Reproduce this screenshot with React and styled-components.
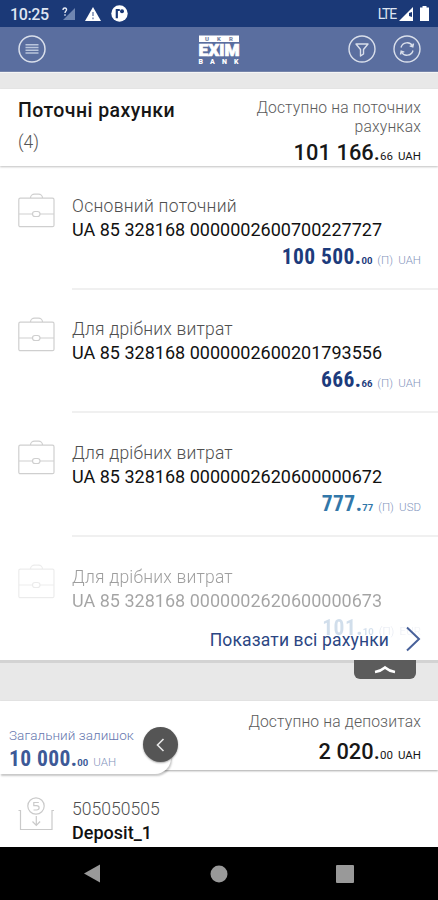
import React from 'react';
import styled, { createGlobalStyle } from 'styled-components';

const GlobalStyle = createGlobalStyle`
  *, *::before, *::after { box-sizing: border-box; }
  body { margin: 0; }
  svg { display: block; flex: none; }
`;

const Screen = styled.div`
  width: 438px;
  height: 900px;
  display: flex;
  flex-direction: column;
  overflow: hidden;
  background: #e8e8e8;
  font-family: Roboto, sans-serif;
  color: #161616;
`;

const StatusBar = styled.header`
  height: 27px;
  flex: none;
  padding: 0 9px 0 10px;
  display: flex;
  align-items: center;
  background: #1b3977;
  color: #dfe5f2;
`;

const Clock = styled.time`
  width: 52px;
  font-size: 16px;
  font-weight: 500;
  line-height: 27px;
  letter-spacing: -0.4px;
  padding-top: 1px;
`;

const StatusIcons = styled.div`
  display: flex;
  align-items: center;
  gap: ${(p) => p.$gap}px;
  margin-left: ${(p) => (p.$end ? 'auto' : 0)};
`;

const Network = styled.span`
  font-size: 14px;
  line-height: 27px;
  letter-spacing: -1.2px;
  padding-top: 1px;
  margin-right: -4px;
`;

const AppBar = styled.nav`
  height: 45px;
  flex: none;
  display: flex;
  align-items: center;
  padding: 0 17px 0 18px;
  background: #5a6e9f;
  border-bottom: 1px solid #7584a9;
`;

const IconButton = styled.button`
  width: 28px;
  height: 28px;
  padding: 0;
  border: 0;
  background: none;
`;

const LogoSlot = styled.div`
  margin-left: 152px;
  margin-right: auto;
`;

const Actions = styled.div`
  display: flex;
  gap: 17px;
`;

const Gap = styled.div`
  height: ${(p) => p.$height}px;
  flex: none;
  display: flex;
  justify-content: flex-end;
  padding-right: 22px;
  background: #e8e8e8;
  border-top: ${(p) => (p.$shaded ? '3px solid #d3d3d3' : '1px solid #f5f5f5')};
`;

const CollapseTab = styled.button`
  width: 62px;
  height: 19px;
  margin-top: -3px;
  padding: 0;
  border: 0;
  border-radius: 0 0 6px 6px;
  background: #5c5c5c;
  display: flex;
  justify-content: center;
`;

const SectionHead = styled.section`
  position: relative;
  z-index: 1;
  height: ${(p) => p.$height}px;
  flex: none;
  display: flex;
  justify-content: space-between;
  padding: ${(p) => p.$padding};
  background: #fff;
  box-shadow: 0 1px 2px rgba(0, 0, 0, ${(p) => p.$shadow});
`;

const TitleBlock = styled.div`
  padding-top: 1px;
`;

const Title = styled.h1`
  margin: 0;
  font-size: 19.5px;
  line-height: 24px;
  font-weight: 500;
  letter-spacing: 0.43px;
`;

const Count = styled.div`
  margin-top: 7px;
  font-size: 17.5px;
  line-height: 24px;
  font-weight: 300;
  color: #555;
`;

const Summary = styled.div`
  display: flex;
  flex-direction: column;
  align-items: flex-end;
  text-align: right;
`;

const SummaryLabel = styled.div`
  width: 190px;
  font-size: 15.7px;
  line-height: 19px;
  font-weight: 300;
  letter-spacing: 0.15px;
  color: #5b5b5b;
`;

const Amount = styled.div`
  display: flex;
  align-items: baseline;
  line-height: 28px;
  color: ${(p) => p.$color || '#171717'};
  margin-top: ${(p) => p.$top || 0}px;
`;

const Whole = styled.span`
  font-size: ${(p) => (p.$bold ? 21.5 : 21.8)}px;
  font-weight: ${(p) => (p.$bold ? 700 : 500)};
  font-stretch: ${(p) => (p.$bold ? '78%' : '100%')};
  letter-spacing: ${(p) => (p.$bold ? 0.4 : 0.1)}px;
  white-space: pre;
`;

const Cents = styled.span`
  font-size: ${(p) => (p.$bold ? 9.5 : 11.5)}px;
  font-weight: ${(p) => (p.$bold ? 700 : 400)};
`;

const Currency = styled.span`
  margin-left: 5px;
  font-size: 11.5px;
  font-weight: ${(p) => (p.$soft ? 300 : 400)};
  color: ${(p) => (p.$soft ? '#8495bd' : 'inherit')};
  word-spacing: 2.5px;
  white-space: pre;
`;

const AccountPanel = styled.main`
  height: 494px;
  flex: none;
  background: #fff;
  display: flex;
  flex-direction: column;
  overflow: hidden;
`;

const AccountRow = styled.article`
  height: 123.7px;
  flex: none;
  display: flex;
  padding: 26px 0 0 18px;
`;

const IconSlot = styled.div`
  opacity: ${(p) => (p.$faded ? 0.4 : 1)};
`;

const AccountBody = styled.div`
  flex: 1;
  margin-left: 17px;
  padding: ${(p) => p.$top}px 17px 0 0;
  border-bottom: ${(p) => (p.$last ? 0 : '2px solid #f0f0f0')};
`;

const AccountName = styled.div`
  font-size: 17.5px;
  line-height: 24px;
  font-weight: 300;
  letter-spacing: ${(p) => p.$spacing ?? 0.2}px;
  color: #4f4f4f;
  opacity: ${(p) => (p.$faded ? 0.55 : 1)};
`;

const AccountNumber = styled.div`
  font-size: 18px;
  line-height: 24px;
  font-weight: ${(p) => (p.$strong ? 500 : 400)};
  letter-spacing: 0.01px;
  color: #111;
  white-space: nowrap;
  opacity: ${(p) => (p.$faded ? 0.38 : 1)};
`;

const AmountRow = styled.div`
  display: flex;
  justify-content: flex-end;
  padding-top: 1px;
  ${(p) => p.$faded && `
    opacity: 0.3;
    mask-image: linear-gradient(90deg, #000 calc(100% - 60px), rgba(0, 0, 0, 0.35));
  `}
`;

const ShowAll = styled.button`
  position: relative;
  height: 36px;
  margin-top: -39px;
  flex: none;
  padding: 0 17px 0 0;
  border: 0;
  background: none;
  display: flex;
  align-items: center;
  justify-content: flex-end;
  gap: 17px;
  font: 400 17.5px/36px Roboto, sans-serif;
  letter-spacing: 0.15px;
  color: #2b4683;

  svg { margin-top: -2px; }
`;

const BalanceCard = styled.aside`
  position: absolute;
  left: 0;
  bottom: -4px;
  width: 171px;
  height: 50px;
  background: #fff;
  border-radius: 0 0 16px 0;
  box-shadow: 1px 2px 2px rgba(0, 0, 0, 0.22);
  clip-path: inset(30px -4px -5px 0);
`;

const BalanceContent = styled.div`
  position: absolute;
  left: 9px;
  top: 25px;
`;

const BalanceLabel = styled.div`
  font-size: 13.5px;
  line-height: 18px;
  font-weight: 300;
  letter-spacing: 0.07px;
  color: #6576ae;
`;

const RoundButton = styled.button`
  position: absolute;
  left: 143px;
  top: 26px;
  width: 35px;
  height: 35px;
  padding: 0;
  border: 0;
  border-radius: 50%;
  background: #555;
  box-shadow: 0 1px 2px rgba(0, 0, 0, 0.35);
  display: flex;
  align-items: center;
  justify-content: center;
`;

const DepositRow = styled.article`
  flex: 1;
  display: flex;
  padding: 26px 0 0 18px;
  background: #fff;
`;

const SystemNav = styled.footer`
  height: 53px;
  flex: none;
  background: #000;
  display: grid;
  grid-template-columns: 158px 96px 156px;
  align-items: center;
  justify-items: center;
  padding-left: 13px;
`;

const SignalUnknown = () => (
  <svg width="13" height="14" viewBox="0 0 13 14">
    <path d="M13 1v12H1z" fill="#6f86b2" />
    <path d="M1 3c0-3 4-2.5 3.5 0C4.3 4.2 3 4 3 6M3 7.2v1.5" fill="none" stroke="#e6ebf5" strokeWidth="1.4" />
  </svg>
);

const Warning = () => (
  <svg width="16" height="14" viewBox="0 0 16 14">
    <path d="M8 0l8 14H0z" fill="#fff" />
    <path d="M8 5v4M8 10.5v1.7" stroke="#6478a2" strokeWidth="1.3" />
  </svg>
);

const RoundBadge = () => (
  <svg width="17" height="17" viewBox="0 0 17 17">
    <circle cx="8.5" cy="8.5" r="8.2" fill="#fff" />
    <path d="M5.8 13.2V5h3" fill="none" stroke="#1b3977" strokeWidth="2.2" />
    <circle cx="11" cy="6.3" r="2" fill="#1b3977" />
  </svg>
);

const Signal = () => (
  <svg width="14" height="14" viewBox="0 0 14 14">
    <path d="M14 0v14H0z" fill="#fff" />
    <path d="M10 6l3-1v5l-3-1z" fill="#1b3977" />
  </svg>
);

const Battery = () => (
  <svg width="9" height="15" viewBox="0 0 9 15">
    <path d="M2.5 0h4v1.5H9V15H0V1.5h2.5z" fill="#fff" />
  </svg>
);

const MenuIcon = () => (
  <svg width="28" height="28" viewBox="0 0 28 28" fill="none" stroke="#d9dfeb">
    <circle cx="14" cy="14" r="13" strokeWidth="1.5" />
    <path d="M7.5 9.8h13M7.5 12.5h13M7.5 15.2h13M7.5 18h13" stroke="#b9c5dc" strokeWidth="1.4" />
  </svg>
);

const FilterIcon = () => (
  <svg width="28" height="28" viewBox="0 0 28 28" fill="none" stroke="#d9dfeb" strokeWidth="1.4">
    <circle cx="14" cy="14" r="13" />
    <path d="M8 9h12l-4.500 5.500V19L12.500 21v-6.500z" strokeLinejoin="round" />
  </svg>
);

const RefreshIcon = () => (
  <svg width="28" height="28" viewBox="0 0 28 28" fill="none" stroke="#d9dfeb" strokeWidth="1.4">
    <circle cx="14" cy="14" r="13" />
    <path d="M8 12.5a6.3 6.3 0 0 1 11.6-1.5M20 15.5a6.3 6.3 0 0 1-11.600 1.5M20.5 8.500l-.7 3.300-3.100-1M7.500 19.500l.7-3.300 3.100 1" />
  </svg>
);

const Logo = () => (
  <svg width="42" height="29" viewBox="0 0 42 29" fontFamily="Roboto, sans-serif" fontWeight="900" fill="#fff">
    <rect x="1" y="0.5" width="40" height="6.5" />
    <g fontSize="6" fill="#75839f">
      <text x="7" y="6">U</text>
      <text x="19" y="6">K</text>
      <text x="31" y="6">R</text>
    </g>
    <text x="0.5" y="20.5" fontSize="16" textLength="41" lengthAdjust="spacingAndGlyphs" stroke="#fff" strokeWidth="0.7">EXIM</text>
    <g fontSize="7">
      <text x="0.5" y="28.5">B</text>
      <text x="12" y="28.5">A</text>
      <text x="24" y="28.5">N</text>
      <text x="36" y="28.5">K</text>
    </g>
  </svg>
);

const Briefcase = () => (
  <svg width="37" height="36" viewBox="0 0 37 36" fill="none" stroke="#cfcfcf" strokeWidth="1.2">
    <rect x="0.8" y="6.2" width="35.2" height="28.5" rx="1.5" />
    <path d="M12.5 6c0-2.400 2-3.800 4-3.800h4c2 0 4 1.400 4 3.800M1 22h13.500M22 22h14" />
    <rect x="14.500" y="19.500" width="7.500" height="5" rx="2.500" />
  </svg>
);

const DepositIcon = () => (
  <svg width="37" height="36" viewBox="0 0 37 36" fill="none" stroke="#cacaca" strokeWidth="1.2">
    <path d="M0.5 14.5H2.5V33.500H34V14.500h2M18.300 20v9M14.500 25.500l3.800 4 3.800-4" />
    <circle cx="18" cy="10" r="8.2" />
    <path d="M20.800 6.500h-5v3.200h2.700c3.500 0 3.500 4.300 0 4.300h-3" />
  </svg>
);

const Chevron = ({ d, width, height, color, weight = 2 }) => (
  <svg width={width} height={height} viewBox={`0 0 ${width} ${height}`}>
    <path d={d} fill="none" stroke={color} strokeWidth={weight} />
  </svg>
);

const Money = ({ whole, cents, currency, color, bold, soft, top }) => (
  <Amount $color={color} $top={top}>
    <Whole $bold={bold}>{whole}.</Whole>
    <Cents $bold={bold}>{cents}</Cents>
    <Currency $soft={soft}>{currency}</Currency>
  </Amount>
);

const accounts = [
  { name: 'Основний поточний', number: 'UA 85 328168 0000002600700227727', whole: '100 500', cents: '00', currency: '(П) UAH', color: '#1c3b7c', spacing: 0.28 },
  { name: 'Для дрібних витрат', number: 'UA 85 328168 0000002600201793556', whole: '666', cents: '66', currency: '(П) UAH', color: '#1c3b7c' },
  { name: 'Для дрібних витрат', number: 'UA 85 328168 0000002620600000672', whole: '777', cents: '77', currency: '(П) USD', color: '#3277a9' },
  { name: 'Для дрібних витрат', number: 'UA 85 328168 0000002620600000673', whole: '101', cents: '10', currency: '(П) EUR', color: '#6993c0', faded: true },
];

export default function App() {
  return (
    <>
      <GlobalStyle />
      <Screen>
        <StatusBar>
          <Clock>10:25</Clock>
          <StatusIcons $gap={10}>
            <SignalUnknown />
            <Warning />
            <RoundBadge />
          </StatusIcons>
          <StatusIcons $gap={7} $end>
            <Network>LTE</Network>
            <Signal />
            <Battery />
          </StatusIcons>
        </StatusBar>
        <AppBar>
          <IconButton aria-label="Меню"><MenuIcon /></IconButton>
          <LogoSlot><Logo /></LogoSlot>
          <Actions>
            <IconButton aria-label="Фільтр"><FilterIcon /></IconButton>
            <IconButton aria-label="Оновити"><RefreshIcon /></IconButton>
          </Actions>
        </AppBar>
        <Gap $height={17} />
        <SectionHead $height={77} $padding="9px 17px 0 18px" $shadow={0.25}>
          <TitleBlock>
            <Title>Поточні рахунки</Title>
            <Count>(4)</Count>
          </TitleBlock>
          <Summary>
            <SummaryLabel>Доступно на поточних рахунках</SummaryLabel>
            <Money whole="101 166" cents="66" currency="UAH" top={3} />
          </Summary>
        </SectionHead>
        <AccountPanel>
          {accounts.map((a) => (
            <AccountRow key={a.number}>
              <IconSlot $faded={a.faded}><Briefcase /></IconSlot>
              <AccountBody $top={1.6} $last={a.faded}>
                <AccountName $faded={a.faded} $spacing={a.spacing}>{a.name}</AccountName>
                <AccountNumber $faded={a.faded}>{a.number}</AccountNumber>
                <AmountRow $faded={a.faded}>
                  <Money whole={a.whole} cents={a.cents} currency={a.currency} color={a.color} bold soft />
                </AmountRow>
              </AccountBody>
            </AccountRow>
          ))}
          <ShowAll>
            Показати всі рахунки
            <Chevron width={15} height={26} d="M1 1.5l12 11.5L1 24.5" color="#48619a" />
          </ShowAll>
        </AccountPanel>
        <Gap $height={41} $shaded>
          <CollapseTab aria-label="Згорнути">
            <Chevron width={22} height={18} d="M1 12q6-1 10-4.500q4 3.500 10 4.500" color="#fff" weight={2.5} />
          </CollapseTab>
        </Gap>
        <SectionHead $height={69} $padding="11px 17px 0 18px" $shadow={0.35}>
          <span />
          <Summary>
            <SummaryLabel>Доступно на депозитах</SummaryLabel>
            <Money whole="2 020" cents="00" currency="UAH" top={7} />
          </Summary>
          <BalanceCard />
          <BalanceContent>
            <BalanceLabel>Загальний залишок</BalanceLabel>
            <Money whole="10 000" cents="00" currency="UAH" color="#3d5997" bold soft top={1} />
          </BalanceContent>
          <RoundButton aria-label="Назад">
            <Chevron width={9} height={14} d="M7.5 1l-6 6 6 6" color="#e8e8e8" weight={1.6} />
          </RoundButton>
        </SectionHead>
        <DepositRow>
          <DepositIcon />
          <AccountBody $top={1} $last>
            <AccountName $spacing={0.05}>505050505</AccountName>
            <AccountNumber $strong>Deposit_1</AccountNumber>
          </AccountBody>
        </DepositRow>
        <SystemNav>
          <svg width="16" height="19" viewBox="0 0 16 19"><path d="M16 .5v18L0 9.5z" fill="#999" /></svg>
          <svg width="18" height="18" viewBox="0 0 18 18"><circle cx="9" cy="9" r="8.5" fill="#999" /></svg>
          <svg width="18" height="18" viewBox="0 0 18 18"><rect width="18" height="18" rx="1" fill="#999" /></svg>
        </SystemNav>
      </Screen>
    </>
  );
}
